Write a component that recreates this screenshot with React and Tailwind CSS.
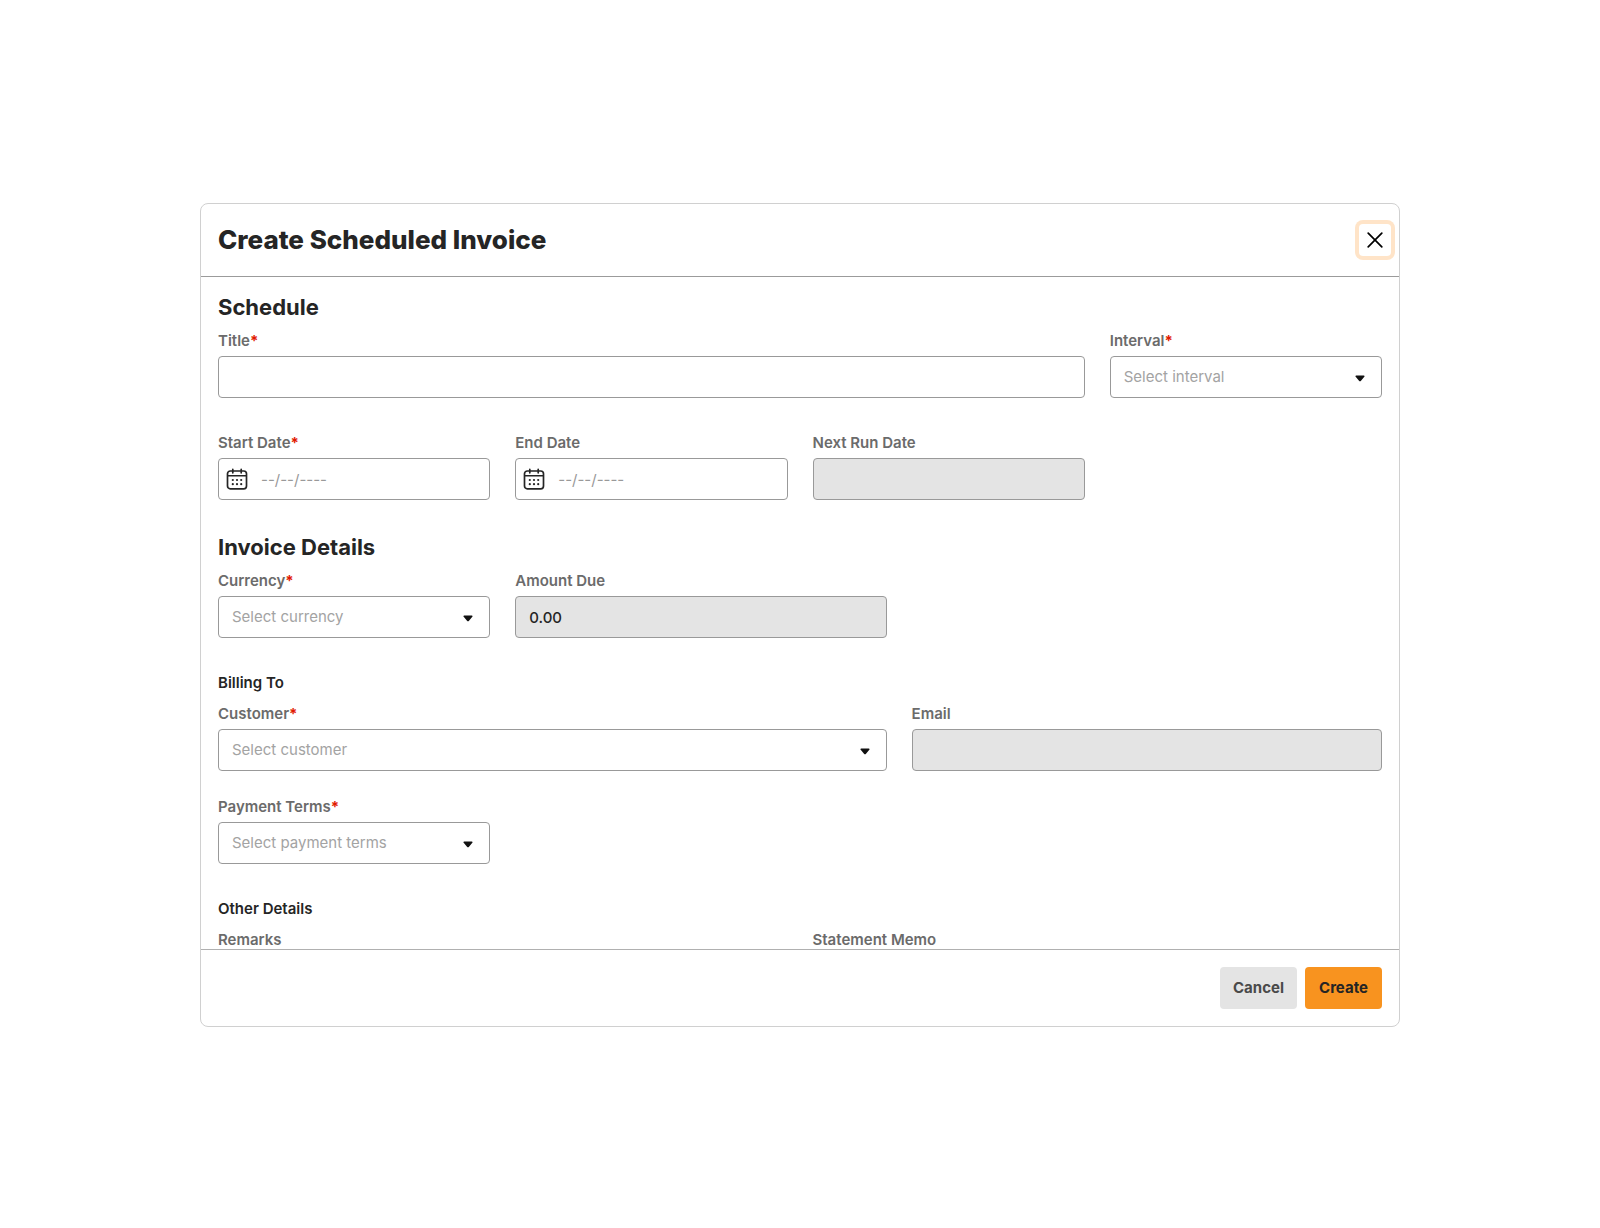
import { useId, useState } from 'react';

const FIELD = 'block h-[42px] w-full rounded border border-[#999999] px-[13px] text-[15px] text-[#252525] outline-none';

const CaretIcon = () => (
    <svg viewBox="0 0 10 7" className="pointer-events-none absolute top-[19px] right-[17px] h-[7px] w-[10px]" aria-hidden="true">
        <path d="M1.2 0.5h7.6c0.8 0 1 0.8 0.5 1.3L6 5.7c-0.6 0.7-1.4 0.7-2 0L0.7 1.8C0.2 1.3 0.4 0.5 1.2 0.5z" fill="#111111" />
    </svg>
);

const CalendarIcon = () => (
    <svg viewBox="0 0 22 22" className="pointer-events-none absolute top-[10px] left-[8px] size-[22px]" fill="none" stroke="#252525" strokeLinecap="round" aria-hidden="true">
        <rect x="1.5" y="3" width="19" height="17.8" rx="2.8" strokeWidth="1.7" />
        <path d="M2 7.8h18" strokeWidth="1.6" />
        <path d="M6.8 1.4v3.4M15.2 1.4v3.4" strokeWidth="1.7" />
        <g fill="#252525" stroke="none">
            <circle cx="6.8" cy="12" r="1.1" />
            <circle cx="11" cy="12" r="1.1" />
            <circle cx="15.2" cy="12" r="1.1" />
            <circle cx="6.8" cy="16.2" r="1.1" />
            <circle cx="11" cy="16.2" r="1.1" />
            <circle cx="15.2" cy="16.2" r="1.1" />
        </g>
    </svg>
);

const Field = ({ id, label, required, className, children }) => (
    <div className={className}>
        <label htmlFor={id} className="mb-1 block text-[15px] leading-[22px] font-semibold text-[#6b6b6b]">
            {label}
            {required && <span className="font-bold text-[#e11900]">*</span>}
        </label>
        <div className="relative">{children}</div>
    </div>
);

const TextField = ({ label, required, className, ...props }) => {
    const id = useId();
    return (
        <Field id={id} label={label} required={required} className={className}>
            <input id={id} type="text" className={`${FIELD} font-medium disabled:bg-[#e4e4e4]`} {...props} />
        </Field>
    );
};

const DateField = ({ label, required, className }) => {
    const id = useId();
    return (
        <Field id={id} label={label} required={required} className={className}>
            <CalendarIcon />
            <input
                id={id}
                type="text"
                placeholder="--/--/----"
                className="block h-[42px] w-full rounded border border-[#999999] pr-[13px] pl-[42px] text-[15px] text-[#252525] outline-none placeholder:text-[#999999]"
            />
        </Field>
    );
};

const SelectField = ({ label, required, placeholder, className }) => {
    const id = useId();
    return (
        <Field id={id} label={label} required={required} className={className}>
            <select id={id} className={`${FIELD} appearance-none bg-white !text-[#a3a3a3]`} defaultValue="">
                <option value="">{placeholder}</option>
            </select>
            <CaretIcon />
        </Field>
    );
};

const TextAreaField = ({ label, className }) => {
    const id = useId();
    return (
        <Field id={id} label={label} className={className}>
            <textarea id={id} rows={4} className="block w-full resize-none rounded border border-[#999999] p-[13px] text-[15px] outline-none" />
        </Field>
    );
};

const Row = ({ children }) => <div className="grid grid-cols-12 gap-x-[25px]">{children}</div>;

const App = () => {
    const [open, setOpen] = useState(true);

    if (!open) return null;

    return (
        <main className="flex h-screen items-center justify-center bg-white pt-0.5 font-['Inter',sans-serif] text-[#252525]">
            <form
                role="dialog"
                aria-labelledby="dialog-title"
                onSubmit={(e) => e.preventDefault()}
                className="flex max-h-[calc(100vh-404px)] w-3/4 flex-col overflow-hidden rounded-lg border border-[#d0d0d0] bg-white"
            >
                <header className="flex h-[73px] shrink-0 items-center justify-between border-b border-[#9b9b9b] pr-2 pl-[17px]">
                    <h1 id="dialog-title" className="text-[26px] leading-8 font-extrabold">Create Scheduled Invoice</h1>
                    <button
                        type="button"
                        aria-label="Close"
                        onClick={() => setOpen(false)}
                        className="flex size-8 items-center justify-center rounded ring-4 ring-[#ffe4c8] outline-none"
                    >
                        <svg viewBox="0 0 16 16" className="size-4" stroke="#000000" strokeWidth="1.7" strokeLinecap="round" aria-hidden="true">
                            <path d="M1.2 1.2l13.6 13.6M14.8 1.2L1.2 14.8" />
                        </svg>
                    </button>
                </header>

                <div className="min-h-0 flex-1 overflow-y-auto px-[17px] pt-[15px] pb-4 [scrollbar-width:none]">
                    {/* Schedule */}
                    <section className="mb-8 flex flex-col gap-[34px]">
                        <div>
                            <h2 className="mb-2 text-[22px] leading-[30px] font-bold">Schedule</h2>
                            <Row>
                                <TextField label="Title" required className="col-span-9" />
                                <SelectField label="Interval" required placeholder="Select interval" className="col-span-3" />
                            </Row>
                        </div>
                        <Row>
                            <DateField label="Start Date" required className="col-span-3" />
                            <DateField label="End Date" className="col-span-3" />
                            <TextField label="Next Run Date" disabled className="col-span-3" />
                        </Row>
                    </section>

                    {/* Invoice details */}
                    <section className="flex flex-col gap-[34px]">
                        <div>
                            <h2 className="mb-2 text-[22px] leading-[30px] font-bold">Invoice Details</h2>
                            <Row>
                                <SelectField label="Currency" required placeholder="Select currency" className="col-span-3" />
                                <TextField label="Amount Due" disabled defaultValue="0.00" className="col-span-4" />
                            </Row>
                        </div>

                        <div>
                            <h3 className="mb-[9px] text-[15px] leading-[22px] font-semibold">Billing To</h3>
                            <div className="flex flex-col gap-[25px]">
                                <Row>
                                    <SelectField label="Customer" required placeholder="Select customer" className="col-span-7" />
                                    <TextField label="Email" disabled className="col-span-5" />
                                </Row>
                                <Row>
                                    <SelectField label="Payment Terms" required placeholder="Select payment terms" className="col-span-3" />
                                </Row>
                            </div>
                        </div>

                        <div>
                            <h3 className="mb-[9px] text-[15px] leading-[22px] font-semibold">Other Details</h3>
                            <Row>
                                <TextAreaField label="Remarks" className="col-span-6" />
                                <TextAreaField label="Statement Memo" className="col-span-6" />
                            </Row>
                        </div>
                    </section>
                </div>

                <footer className="flex shrink-0 justify-end gap-2 border-t border-[#b0b0b0] px-[17px] py-[17px]">
                    <button
                        type="button"
                        onClick={() => setOpen(false)}
                        className="h-[42px] min-w-[77px] rounded bg-[#e4e4e4] px-[13px] text-[15px] font-bold text-[#4a4a4a]"
                    >
                        Cancel
                    </button>
                    <button type="submit" className="h-[42px] min-w-[77px] rounded bg-[#f8931f] px-[13px] text-[15px] font-bold text-[#252525]">
                        Create
                    </button>
                </footer>
            </form>
        </main>
    );
};

export default App;
